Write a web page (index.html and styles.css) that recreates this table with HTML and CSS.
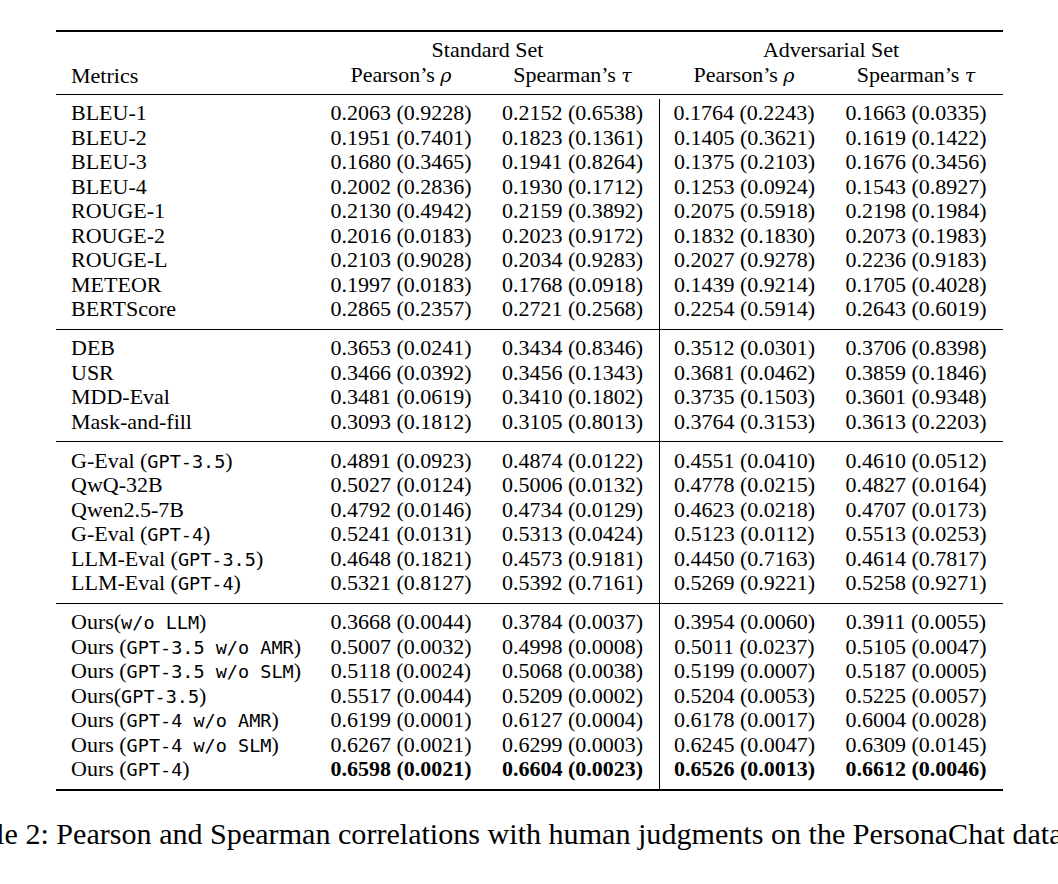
FILE: index.html
```html
<!DOCTYPE html>
<html>
<head>
<meta charset="utf-8">
<link rel="stylesheet" href="styles.css">
</head>
<body>
<div class="page">
<table class="results">
<colgroup>
<col class="col-metric"><col class="col-a"><col class="col-b"><col class="col-a"><col class="col-c">
</colgroup>
<thead>
<tr class="h1"><th class="metric"></th><th colspan="2">Standard Set</th><th colspan="2">Adversarial Set</th></tr>
<tr class="h2"><th class="metric">Metrics</th><th class="pear">Pearson’s <i>ρ</i></th><th>Spearman’s <i>τ</i></th><th class="pear">Pearson’s <i>ρ</i></th><th>Spearman’s <i>τ</i></th></tr>
</thead>
<tbody class="grp grp-first">
<tr><td class="metric">BLEU-1</td><td>0.2063 (0.9228)</td><td>0.2152 (0.6538)</td><td class="adv">0.1764 (0.2243)</td><td>0.1663 (0.0335)</td></tr>
<tr><td class="metric">BLEU-2</td><td>0.1951 (0.7401)</td><td>0.1823 (0.1361)</td><td class="adv">0.1405 (0.3621)</td><td>0.1619 (0.1422)</td></tr>
<tr><td class="metric">BLEU-3</td><td>0.1680 (0.3465)</td><td>0.1941 (0.8264)</td><td class="adv">0.1375 (0.2103)</td><td>0.1676 (0.3456)</td></tr>
<tr><td class="metric">BLEU-4</td><td>0.2002 (0.2836)</td><td>0.1930 (0.1712)</td><td class="adv">0.1253 (0.0924)</td><td>0.1543 (0.8927)</td></tr>
<tr><td class="metric">ROUGE-1</td><td>0.2130 (0.4942)</td><td>0.2159 (0.3892)</td><td class="adv">0.2075 (0.5918)</td><td>0.2198 (0.1984)</td></tr>
<tr><td class="metric">ROUGE-2</td><td>0.2016 (0.0183)</td><td>0.2023 (0.9172)</td><td class="adv">0.1832 (0.1830)</td><td>0.2073 (0.1983)</td></tr>
<tr><td class="metric">ROUGE-L</td><td>0.2103 (0.9028)</td><td>0.2034 (0.9283)</td><td class="adv">0.2027 (0.9278)</td><td>0.2236 (0.9183)</td></tr>
<tr><td class="metric">METEOR</td><td>0.1997 (0.0183)</td><td>0.1768 (0.0918)</td><td class="adv">0.1439 (0.9214)</td><td>0.1705 (0.4028)</td></tr>
<tr><td class="metric">BERTScore</td><td>0.2865 (0.2357)</td><td>0.2721 (0.2568)</td><td class="adv">0.2254 (0.5914)</td><td>0.2643 (0.6019)</td></tr>
</tbody>
<tbody class="grp">
<tr><td class="metric">DEB</td><td>0.3653 (0.0241)</td><td>0.3434 (0.8346)</td><td class="adv">0.3512 (0.0301)</td><td>0.3706 (0.8398)</td></tr>
<tr><td class="metric">USR</td><td>0.3466 (0.0392)</td><td>0.3456 (0.1343)</td><td class="adv">0.3681 (0.0462)</td><td>0.3859 (0.1846)</td></tr>
<tr><td class="metric">MDD-Eval</td><td>0.3481 (0.0619)</td><td>0.3410 (0.1802)</td><td class="adv">0.3735 (0.1503)</td><td>0.3601 (0.9348)</td></tr>
<tr><td class="metric">Mask-and-fill</td><td>0.3093 (0.1812)</td><td>0.3105 (0.8013)</td><td class="adv">0.3764 (0.3153)</td><td>0.3613 (0.2203)</td></tr>
</tbody>
<tbody class="grp">
<tr><td class="metric">G-Eval (<span class="tt">GPT-3.5</span>)</td><td>0.4891 (0.0923)</td><td>0.4874 (0.0122)</td><td class="adv">0.4551 (0.0410)</td><td>0.4610 (0.0512)</td></tr>
<tr><td class="metric">QwQ-32B</td><td>0.5027 (0.0124)</td><td>0.5006 (0.0132)</td><td class="adv">0.4778 (0.0215)</td><td>0.4827 (0.0164)</td></tr>
<tr><td class="metric">Qwen2.5-7B</td><td>0.4792 (0.0146)</td><td>0.4734 (0.0129)</td><td class="adv">0.4623 (0.0218)</td><td>0.4707 (0.0173)</td></tr>
<tr><td class="metric">G-Eval (<span class="tt">GPT-4</span>)</td><td>0.5241 (0.0131)</td><td>0.5313 (0.0424)</td><td class="adv">0.5123 (0.0112)</td><td>0.5513 (0.0253)</td></tr>
<tr><td class="metric">LLM-Eval (<span class="tt">GPT-3.5</span>)</td><td>0.4648 (0.1821)</td><td>0.4573 (0.9181)</td><td class="adv">0.4450 (0.7163)</td><td>0.4614 (0.7817)</td></tr>
<tr><td class="metric">LLM-Eval (<span class="tt">GPT-4</span>)</td><td>0.5321 (0.8127)</td><td>0.5392 (0.7161)</td><td class="adv">0.5269 (0.9221)</td><td>0.5258 (0.9271)</td></tr>
</tbody>
<tbody class="grp grp-last">
<tr><td class="metric">Ours(<span class="tt">w/o LLM</span>)</td><td>0.3668 (0.0044)</td><td>0.3784 (0.0037)</td><td class="adv">0.3954 (0.0060)</td><td>0.3911 (0.0055)</td></tr>
<tr><td class="metric">Ours (<span class="tt">GPT-3.5 w/o AMR</span>)</td><td>0.5007 (0.0032)</td><td>0.4998 (0.0008)</td><td class="adv">0.5011 (0.0237)</td><td>0.5105 (0.0047)</td></tr>
<tr><td class="metric">Ours (<span class="tt">GPT-3.5 w/o SLM</span>)</td><td>0.5118 (0.0024)</td><td>0.5068 (0.0038)</td><td class="adv">0.5199 (0.0007)</td><td>0.5187 (0.0005)</td></tr>
<tr><td class="metric">Ours(<span class="tt">GPT-3.5</span>)</td><td>0.5517 (0.0044)</td><td>0.5209 (0.0002)</td><td class="adv">0.5204 (0.0053)</td><td>0.5225 (0.0057)</td></tr>
<tr><td class="metric">Ours (<span class="tt">GPT-4 w/o AMR</span>)</td><td>0.6199 (0.0001)</td><td>0.6127 (0.0004)</td><td class="adv">0.6178 (0.0017)</td><td>0.6004 (0.0028)</td></tr>
<tr><td class="metric">Ours (<span class="tt">GPT-4 w/o SLM</span>)</td><td>0.6267 (0.0021)</td><td>0.6299 (0.0003)</td><td class="adv">0.6245 (0.0047)</td><td>0.6309 (0.0145)</td></tr>
<tr class="best"><td class="metric">Ours (<span class="tt">GPT-4</span>)</td><td>0.6598 (0.0021)</td><td>0.6604 (0.0023)</td><td class="adv">0.6526 (0.0013)</td><td>0.6612 (0.0046)</td></tr>
</tbody>
</table>
<div class="caption"><span>Table 2: Pearson and Spearman correlations with human judgments on the PersonaChat dataset.</span></div>
</div>
</body>
</html>
```
FILE: styles.css
```css
html, body {
  margin: 0;
  padding: 0;
  background: #ffffff;
  overflow: hidden;
}

body {
  font-family: "Liberation Serif", "Times New Roman", serif;
  color: #000000;
}

.page {
  width: 1058px;
  padding-top: 30px;
}

.results {
  margin-left: 56px;
  width: 947px;
  table-layout: fixed;
  border-collapse: separate;
  border-spacing: 0;
  border-top: 2px solid #000;
  border-bottom: 2px solid #000;
  font-size: 22px;
  line-height: 24.5px;
}

.col-metric { width: 260px; }
.col-a { width: 170px; }
.col-b { width: 173px; }
.col-c { width: 174px; }

.results th,
.results td {
  padding: 0;
  font-weight: normal;
  text-align: center;
  white-space: nowrap;
}

.results .metric {
  text-align: left;
  padding-left: 15px;
}

.results i {
  font-family: "DejaVu Serif", "Liberation Serif", serif;
  font-style: italic;
  font-size: 19px;
}

.h1 th {
  padding-top: 5px;
  line-height: 25px;
}

.h2 th {
  line-height: 25px;
  padding-bottom: 5.5px;
  border-bottom: 1px solid #000;
}

.grp tr:first-child td {
  padding-top: 6.75px;
}

.grp tr:last-child td {
  padding-bottom: 6.75px;
}

.grp + .grp tr:first-child td {
  border-top: 1px solid #000;
}

.results td.adv {
  border-left: 1px solid #000;
}

.grp-first tr:first-child td.adv {
  border-left: none;
  background: linear-gradient(#000, #000) 0 4px / 1px 100% no-repeat;
}

.tt {
  font-family: "DejaVu Sans Mono", monospace;
  font-size: 18.5px;
  line-height: 1;
}

.best td:not(.metric) {
  font-weight: bold;
}

.caption {
  display: flex;
  justify-content: center;
  box-sizing: border-box;
  width: 1058px;
  padding-right: 3px;
  margin-top: 26px;
  font-size: 30.1px;
  line-height: 34px;
  white-space: nowrap;
}
```
